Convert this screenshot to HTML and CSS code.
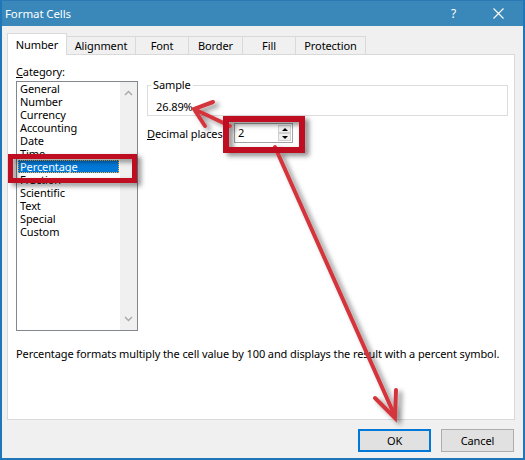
FILE: index.html
```html
<!DOCTYPE html>
<html>
<head>
<meta charset="utf-8">
<title>Format Cells</title>
<link rel="stylesheet" href="styles.css">
</head>
<body>
<div class="window">
  <div class="titlebar">
    <span class="title">Format Cells</span>
    <span class="spacer"></span>
    <span class="help">?</span>
    <span class="close"><svg width="11" height="11" viewBox="0 0 11 11"><path d="M0.5 0.5 L10.5 10.5 M10.5 0.5 L0.5 10.5" stroke="#fff" stroke-width="1.1" fill="none"/></svg></span>
  </div>
  <div class="client">
    <div class="tabs">
      <div class="tab active w-number">Number</div>
      <div class="tab w-align">Alignment</div>
      <div class="tab w-font">Font</div>
      <div class="tab w-border">Border</div>
      <div class="tab w-fill">Fill</div>
      <div class="tab w-prot">Protection</div>
    </div>
    <div class="panel">
      <div class="main">
        <div class="category">
          <div class="cat-label"><u>C</u>ategory:</div>
          <div class="listbox">
            <ul class="list">
              <li class="item">General</li>
              <li class="item">Number</li>
              <li class="item">Currency</li>
              <li class="item">Accounting</li>
              <li class="item">Date</li>
              <li class="item">Time</li>
              <li class="item selected">Percentage</li>
              <li class="item">Fraction</li>
              <li class="item">Scientific</li>
              <li class="item">Text</li>
              <li class="item">Special</li>
              <li class="item">Custom</li>
            </ul>
            <div class="scrollbar">
              <svg width="9" height="6" viewBox="0 0 9 6"><path d="M1 5 L4.5 1.5 L8 5" stroke="#a6a6a6" stroke-width="1.3" fill="none"/></svg>
              <svg width="9" height="6" viewBox="0 0 9 6"><path d="M1 1 L4.5 4.5 L8 1" stroke="#a6a6a6" stroke-width="1.3" fill="none"/></svg>
            </div>
          </div>
        </div>
        <div class="details">
          <fieldset class="sample">
            <legend>Sample</legend>
            <div class="value">26.89%</div>
          </fieldset>
          <div class="decimal">
            <span class="dec-label"><u>D</u>ecimal places:</span>
            <div class="spin">
              <span class="spin-value">2</span>
              <span class="spin-btns">
                <span class="spin-btn"><span class="tri-up"></span></span>
                <span class="spin-btn"><span class="tri-down"></span></span>
              </span>
            </div>
          </div>
        </div>
      </div>
      <p class="desc">Percentage formats multiply the cell value by 100 and displays the result with a percent symbol.</p>
    </div>
    <div class="buttons">
      <div class="btn default">OK</div>
      <div class="btn">Cancel</div>
    </div>
  </div>
</div>
<svg class="annotations" width="525" height="460" viewBox="0 0 525 460">
  <defs>
    <filter id="shadow" x="-20%" y="-20%" width="140%" height="140%">
      <feDropShadow dx="4" dy="3" stdDeviation="2.5" flood-color="#000" flood-opacity="0.45"/>
    </filter>
  </defs>
  <g filter="url(#shadow)">
    <g class="arrow">
      <line x1="275" y1="147" x2="394" y2="414"/>
      <polyline points="375,398 395,418 396,390"/>
      <line x1="230" y1="126" x2="196" y2="110"/>
      <polyline points="213,102 194,109 205,126"/>
    </g>
    <rect class="mark thin" x="10.5" y="156.5" width="124" height="24"/>
    <rect class="mark thick" x="226" y="119" width="76" height="31"/>
  </g>
</svg>
</body>
</html>
```

FILE: styles.css
```css
* {
  box-sizing: border-box;
}

html,
body {
  margin: 0;
  padding: 0;
}

body {
  width: 525px;
  height: 460px;
  position: relative;
  overflow: hidden;
  font-family: "Noto Sans", "Open Sans", sans-serif;
  font-size: 11px;
  letter-spacing: -0.1px;
  color: #000;
  background: #f0f0f0;
}

.window {
  width: 525px;
  height: 460px;
  border: 2px solid #1f77b9;
  border-top: 1px solid #2a79b4;
  display: flex;
  flex-direction: column;
  background: #f0f0f0;
}

.titlebar {
  height: 25px;
  flex: none;
  background: #3a87b9;
  color: #fff;
  display: flex;
  align-items: center;
  padding-left: 3px;
}

.title {
  font-size: 11.5px;
}

.spacer {
  flex: 1;
}

.help {
  font-size: 12px;
  margin-right: 37px;
}

.close {
  display: flex;
  margin-right: 19px;
}

.client {
  flex: 1;
  display: flex;
  flex-direction: column;
  padding: 7px 8px 0 5px;
}

.tabs {
  display: flex;
  align-items: flex-end;
  height: 21px;
  flex: none;
}

.tab {
  height: 18px;
  border: 1px solid #d9d9d9;
  border-bottom: 0;
  margin-left: -1px;
  background: #f0f0f0;
  text-align: center;
  line-height: 17px;
  white-space: nowrap;
}

.tab.active {
  height: 22px;
  margin-left: 0;
  margin-bottom: -1px;
  background: #fff;
  position: relative;
  z-index: 1;
  padding-top: 2px;
  line-height: 18px;
}

.w-number { width: 60px; }
.w-align { width: 70px; }
.w-font { width: 54px; }
.w-border { width: 55px; }
.w-fill { width: 54px; }
.w-prot { width: 71px; }

.panel {
  width: 508px;
  height: 366px;
  flex: none;
  background: #fff;
  border: 1px solid #d9d9d9;
  padding: 9px 8px 0 8px;
}

.main {
  display: flex;
  gap: 9px;
}

.category {
  width: 122px;
  flex: none;
}

.cat-label {
  height: 15px;
  line-height: 15px;
  margin-bottom: 2px;
}

.listbox {
  height: 250px;
  border: 1px solid #828790;
  display: flex;
}

.list {
  flex: 1;
  list-style: none;
  margin: 0;
  padding: 0;
}

.item {
  height: 13px;
  line-height: 13px;
  margin: 0 1px;
  padding-left: 2px;
  white-space: nowrap;
}

.item.selected {
  background: #0078d7;
  color: #fff;
  outline: 1px dotted #f4b046;
  outline-offset: -1px;
}

.scrollbar {
  width: 17px;
  flex: none;
  background: #f0f0f0;
  display: flex;
  flex-direction: column;
  justify-content: space-between;
  align-items: center;
  padding: 8px 0 8px;
}

.details {
  margin-top: 14px;
}

.sample {
  width: 361px;
  min-width: 0;
  margin: 0;
  border: 1px solid #dcdcdc;
  padding: 0 3px 1px 3px;
}

.sample legend {
  padding: 0 2px;
  line-height: 14px;
}

.value {
  margin-top: 8px;
  line-height: 14px;
  padding-left: 5px;
}

.decimal {
  display: flex;
  align-items: center;
  margin-top: 7px;
}

.dec-label {
  width: 87px;
  flex: none;
  white-space: nowrap;
}

.spin {
  width: 59px;
  height: 20px;
  border: 1px solid #a3a3a3;
  display: flex;
  background: #fff;
}

.spin-value {
  flex: 1;
  padding-left: 3px;
  line-height: 18px;
}

.spin-btns {
  width: 15px;
  display: flex;
  flex-direction: column;
  padding: 1px;
}

.spin-btn {
  flex: 1;
  background: #f0f0f0;
  border: 1px solid #d0d0d0;
  display: flex;
  align-items: center;
  justify-content: center;
}

.tri-up {
  width: 0;
  height: 0;
  border-left: 3px solid transparent;
  border-right: 3px solid transparent;
  border-bottom: 3px solid #000;
}

.tri-down {
  width: 0;
  height: 0;
  border-left: 3px solid transparent;
  border-right: 3px solid transparent;
  border-top: 3px solid #000;
}

.desc {
  margin: 16px 0 0 0;
  line-height: 14px;
  white-space: nowrap;
}

.buttons {
  display: flex;
  justify-content: flex-end;
  gap: 10px;
  margin-top: 9px;
  padding-right: 1px;
}

.btn {
  width: 73px;
  height: 23px;
  background: #e1e1e1;
  border: 1px solid #adadad;
  text-align: center;
  line-height: 21px;
}

.btn.default {
  border: 2px solid #0078d7;
  line-height: 19px;
}

.annotations {
  position: absolute;
  left: 0;
  top: 0;
  pointer-events: none;
}

.arrow line,
.arrow polyline {
  stroke: #d4363c;
  stroke-width: 4;
  fill: none;
  stroke-linecap: round;
  stroke-linejoin: miter;
}

.mark {
  fill: none;
  stroke: #bf1020;
}

.mark.thin {
  stroke-width: 5;
}

.mark.thick {
  stroke-width: 6;
}
```
